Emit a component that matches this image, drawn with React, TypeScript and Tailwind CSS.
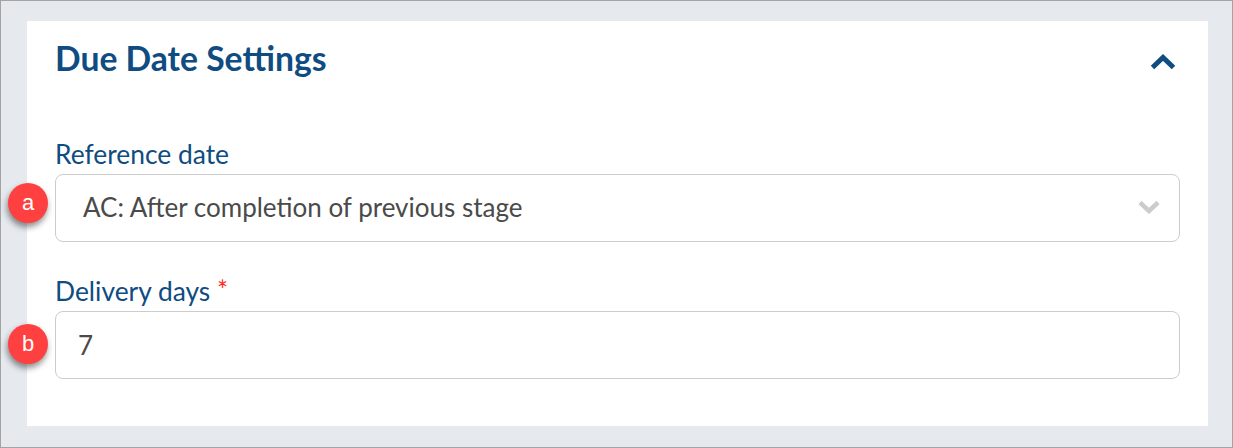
export default function App() {
  return (
    <div className="h-[448px] w-[1233px] overflow-hidden border border-[#a3a3a3] bg-[#e6e9ee] pt-5 pr-6 pb-[21px] pl-[26px] font-['Lato',sans-serif]">
      <div className="relative h-[405px] bg-white px-7 pt-[14px]">
        <div className="flex h-[46px] items-center justify-between pr-[3px]">
          <h2 className="text-[33.700px] font-bold leading-[46px] text-[#0f4c81]">Due Date Settings</h2>
          <svg width="26" height="16" viewBox="0 0 26 16" className="mr-[1px] mt-[7px]" fill="none" stroke="#0f4c81" strokeWidth="5" strokeLinejoin="miter">
            <path d="M2.5 13.5 13 3.5l10.500 10" />
          </svg>
        </div>

        <label className="mt-[54px] block text-[26.400px] leading-[38px] text-[#0f4c81]">Reference date</label>
        <div className="relative mt-px flex h-[68px] w-[1125px] items-center justify-between rounded-[8px] border border-[#cccccc] pb-[2px] pl-[27px] pr-[19px] text-[26px] text-[#4a4a4a]">
          <span>AC: After completion of previous stage</span>
          <svg width="22" height="14" viewBox="0 0 22 14" fill="none" stroke="#cccccc" strokeWidth="4.500">
            <path d="M2 2.500 11 11l9-8.500" />
          </svg>
          <span className="absolute -left-[48px] top-[8px] flex h-10 w-10 items-center justify-center rounded-full bg-[#ff4040] pb-[2px] font-['Liberation_Sans',sans-serif] text-[22px] text-white shadow-[-1px_4px_6px_rgba(0,0,0,0.45)]">
            a
          </span>
        </div>

        <label className="mt-[30px] block text-[26.400px] leading-[38px] text-[#0f4c81]">
          Delivery days <span className="relative -top-[1px] text-[26px] leading-none text-[#ff2a1a]">*</span>
        </label>
        <div className="relative mt-px flex h-[68px] w-[1125px] items-center rounded-[8px] border border-[#cccccc] pl-[22px] text-[26px] text-[#4a4a4a]">
          <span>7</span>
          <span className="absolute -left-[48px] top-[12px] flex h-10 w-10 items-center justify-center rounded-full bg-[#ff4040] pb-[2px] font-['Liberation_Sans',sans-serif] text-[22px] text-white shadow-[-1px_4px_6px_rgba(0,0,0,0.45)]">
            b
          </span>
        </div>
      </div>
    </div>
  )
}
